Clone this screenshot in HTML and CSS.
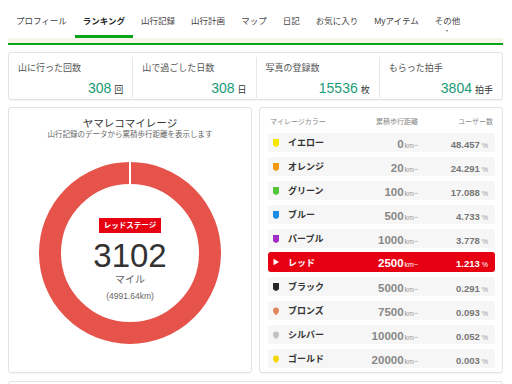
FILE: index.html
```html
<!DOCTYPE html>
<html lang="ja">
<head>
    <meta charset="UTF-8">
    <meta name="viewport" content="width=device-width, initial-scale=1.0">
    <title>ヤマレコ ランキング</title>
    <link rel="stylesheet" href="styles.css">
</head>
<body>
    <div class="page">
        <!-- タブ -->
        <nav class="tabs">
            <a class="tab">プロフィール</a>
            <a class="tab active">ランキング</a>
            <a class="tab">山行記録</a>
            <a class="tab">山行計画</a>
            <a class="tab">マップ</a>
            <a class="tab">日記</a>
            <a class="tab">お気に入り</a>
            <a class="tab">Myアイテム</a>
            <a class="tab more">その他</a>
        </nav>
        <div class="tab-band"></div>

        <!-- 集計 -->
        <section class="stats">
            <div class="stat">
                <div class="stat-label">山に行った回数</div>
                <div class="stat-value"><b>308</b><span>回</span></div>
            </div>
            <div class="stat">
                <div class="stat-label">山で過ごした日数</div>
                <div class="stat-value"><b>308</b><span>日</span></div>
            </div>
            <div class="stat">
                <div class="stat-label">写真の登録数</div>
                <div class="stat-value"><b>15536</b><span>枚</span></div>
            </div>
            <div class="stat">
                <div class="stat-label">もらった拍手</div>
                <div class="stat-value"><b>3804</b><span>拍手</span></div>
            </div>
        </section>

        <div class="panels">
            <!-- マイレージ -->
            <section class="card mileage">
                <h2 class="mileage-title">ヤマレコマイレージ</h2>
                <p class="mileage-sub">山行記録のデータから累積歩行距離を表示します</p>
                <div class="donut">
                    <svg class="donut-ring" width="182" height="182" viewBox="0 0 182 182">
                        <circle cx="91" cy="91" r="80" fill="none" stroke="#e5534b" stroke-width="22"/>
                        <line x1="91" y1="0" x2="91" y2="22" stroke="#fff" stroke-width="2"/>
                    </svg>
                    <div class="donut-center">
                        <div class="stage-badge">レッドステージ</div>
                        <div class="mile-num">3102</div>
                        <div class="mile-unit">マイル</div>
                        <div class="mile-km">(4991.64km)</div>
                    </div>
                </div>
            </section>

            <!-- マイレージカラー -->
            <section class="card colors">
                <div class="color-head">
                    <span>マイレージカラー</span>
                    <span class="right">累積歩行距離</span>
                    <span class="right">ユーザー数</span>
                </div>
                <div class="color-row">
                    <div class="color-name"><svg class="badge-icon" viewBox="0 0 6 8"><path d="M0 0H6V5.2C6 6.6 4.6 7.5 3 8C1.4 7.5 0 6.6 0 5.2Z" fill="#f7e600"/></svg>イエロー</div>
                    <div class="dist"><b>0</b><small>km~</small></div>
                    <div class="pct"><b>48.457</b><small>%</small></div>
                </div>
                <div class="color-row">
                    <div class="color-name"><svg class="badge-icon" viewBox="0 0 6 8"><path d="M0 0H6V5.2C6 6.6 4.6 7.5 3 8C1.4 7.5 0 6.6 0 5.2Z" fill="#f39a0f"/></svg>オレンジ</div>
                    <div class="dist"><b>20</b><small>km~</small></div>
                    <div class="pct"><b>24.291</b><small>%</small></div>
                </div>
                <div class="color-row">
                    <div class="color-name"><svg class="badge-icon" viewBox="0 0 6 8"><path d="M0 0H6V5.2C6 6.6 4.6 7.5 3 8C1.4 7.5 0 6.6 0 5.2Z" fill="#55c43a"/></svg>グリーン</div>
                    <div class="dist"><b>100</b><small>km~</small></div>
                    <div class="pct"><b>17.088</b><small>%</small></div>
                </div>
                <div class="color-row">
                    <div class="color-name"><svg class="badge-icon" viewBox="0 0 6 8"><path d="M0 0H6V5.2C6 6.6 4.6 7.5 3 8C1.4 7.5 0 6.6 0 5.2Z" fill="#1e8be6"/></svg>ブルー</div>
                    <div class="dist"><b>500</b><small>km~</small></div>
                    <div class="pct"><b>4.733</b><small>%</small></div>
                </div>
                <div class="color-row">
                    <div class="color-name"><svg class="badge-icon" viewBox="0 0 6 8"><path d="M0 0H6V5.2C6 6.6 4.6 7.5 3 8C1.4 7.5 0 6.6 0 5.2Z" fill="#a02fc8"/></svg>パープル</div>
                    <div class="dist"><b>1000</b><small>km~</small></div>
                    <div class="pct"><b>3.778</b><small>%</small></div>
                </div>
                <div class="color-row current">
                    <div class="color-name"><svg class="badge-icon" viewBox="0 0 6 8"><path d="M0.5 0.8L6 4L0.5 7.2Z" fill="#fff"/></svg>レッド</div>
                    <div class="dist"><b>2500</b><small>km~</small></div>
                    <div class="pct"><b>1.213</b><small>%</small></div>
                </div>
                <div class="color-row">
                    <div class="color-name"><svg class="badge-icon" viewBox="0 0 6 8"><path d="M0 0H6V5.2C6 6.6 4.6 7.5 3 8C1.4 7.5 0 6.6 0 5.2Z" fill="#262626"/></svg>ブラック</div>
                    <div class="dist"><b>5000</b><small>km~</small></div>
                    <div class="pct"><b>0.291</b><small>%</small></div>
                </div>
                <div class="color-row">
                    <div class="color-name"><svg class="badge-icon" viewBox="0 0 6 8"><path d="M3 0.4C4.8 0.4 6 1.4 6 3.3C6 5.6 4.4 7.3 3 8C1.6 7.3 0 5.6 0 3.3C0 1.4 1.2 0.4 3 0.4Z" fill="#e0875a"/></svg>ブロンズ</div>
                    <div class="dist"><b>7500</b><small>km~</small></div>
                    <div class="pct"><b>0.093</b><small>%</small></div>
                </div>
                <div class="color-row">
                    <div class="color-name"><svg class="badge-icon" viewBox="0 0 6 8"><path d="M3 0.4C4.8 0.4 6 1.4 6 3.3C6 5.6 4.4 7.3 3 8C1.6 7.3 0 5.6 0 3.3C0 1.4 1.2 0.4 3 0.4Z" fill="#c2c2c2"/></svg>シルバー</div>
                    <div class="dist"><b>10000</b><small>km~</small></div>
                    <div class="pct"><b>0.052</b><small>%</small></div>
                </div>
                <div class="color-row">
                    <div class="color-name"><svg class="badge-icon" viewBox="0 0 6 8"><path d="M3 0.4C4.8 0.4 6 1.4 6 3.3C6 5.6 4.4 7.3 3 8C1.6 7.3 0 5.6 0 3.3C0 1.4 1.2 0.4 3 0.4Z" fill="#f4d600"/></svg>ゴールド</div>
                    <div class="dist"><b>20000</b><small>km~</small></div>
                    <div class="pct"><b>0.003</b><small>%</small></div>
                </div>
            </section>
        </div>

        <section class="card next"></section>
    </div>
</body>
</html>
```

FILE: styles.css
```css
* {
    margin: 0;
    padding: 0;
    box-sizing: border-box;
}
html, body {
    overflow: hidden;
}
body {
    font-family: 'Liberation Sans', 'Noto Sans CJK JP', sans-serif;
    background-color: #fff;
    color: #333;
}
.page {
    width: 495px;
    margin-left: 8px;
}
/* タブ */
.tabs {
    display: flex;
    height: 38px;
}
.tab {
    position: relative;
    display: flex;
    align-items: center;
    padding: 4px 8px 0;
    border-bottom: 3px solid transparent;
    font-size: 8.5px;
    color: #444;
    white-space: nowrap;
    cursor: pointer;
}
.tab.active {
    border-bottom-color: #0aa51d;
    color: #222;
    font-weight: bold;
}
.tab.more::after {
    content: '';
    position: absolute;
    left: 50%;
    bottom: 3px;
    margin-left: -1.5px;
    border-left: 1.5px solid transparent;
    border-right: 1.5px solid transparent;
    border-top: 2px solid #666;
}
.tab-band {
    height: 7px;
    background: #f7f4ea;
    border-bottom: 2px solid #0aa51d;
}
/* 集計 */
.stats {
    display: grid;
    grid-template-columns: repeat(4, 1fr);
    height: 48px;
    margin-top: 7px;
    padding: 4px 0;
    border: 1px solid #e3e3e3;
    border-radius: 3px;
    box-shadow: 0 1px 1px rgba(0, 0, 0, 0.04);
}
.stat {
    padding: 5px 9px 0;
}
.stat + .stat {
    border-left: 1px solid #e6e6e6;
}
.stat-label {
    font-size: 9px;
    line-height: 13px;
    color: #555;
}
.stat-value {
    margin-top: 5px;
    text-align: right;
    line-height: 15px;
}
.stat-value b {
    font-size: 14px;
    font-weight: normal;
    color: #179b76;
}
.stat-value span {
    margin-left: 3px;
    font-size: 9px;
    color: #333;
}
/* パネル */
.panels {
    display: grid;
    grid-template-columns: 244px 1fr;
    gap: 7px;
    margin-top: 7px;
}
.card {
    height: 266px;
    border: 1px solid #e3e3e3;
    border-radius: 3px;
    box-shadow: 0 1px 1px rgba(0, 0, 0, 0.04);
}
.mileage {
    padding-top: 8px;
    text-align: center;
}
.mileage-title {
    font-size: 10.5px;
    line-height: 14px;
    font-weight: normal;
    color: #333;
}
.mileage-sub {
    font-size: 7.5px;
    line-height: 10px;
    color: #666;
}
.donut {
    display: grid;
    width: 182px;
    height: 182px;
    margin: 22px auto 0;
}
.donut-ring, .donut-center {
    grid-area: 1 / 1;
}
.donut-center {
    display: flex;
    flex-direction: column;
    align-items: center;
    padding-top: 56px;
}
.stage-badge {
    height: 15px;
    line-height: 15px;
    padding: 0 5px;
    background: #e60012;
    color: #fff;
    font-size: 7.5px;
    font-weight: bold;
}
.mile-num {
    margin-top: 6px;
    font-size: 33px;
    line-height: 34px;
    color: #333;
}
.mile-unit {
    margin-top: 1px;
    font-size: 10px;
    line-height: 12px;
    color: #666;
}
.mile-km {
    margin-top: 4px;
    font-size: 8.5px;
    line-height: 12px;
    color: #666;
}
/* マイレージカラー */
.colors {
    padding: 8px 7px 0 8px;
}
.color-head {
    display: grid;
    grid-template-columns: 88px 60px 1fr;
    height: 12px;
    margin-bottom: 5px;
    padding: 0 2px;
    font-size: 7px;
    line-height: 12px;
    color: #888;
}
.right {
    text-align: right;
}
.color-row {
    display: grid;
    grid-template-columns: 85px 60px 1fr;
    align-items: center;
    height: 19px;
    margin-bottom: 5px;
    padding: 0 7px 0 5px;
    background: #f6f6f6;
    border-radius: 2px;
}
.color-name {
    display: flex;
    align-items: center;
    gap: 9px;
    font-size: 9px;
    font-weight: bold;
    color: #333;
}
.badge-icon {
    width: 6px;
    height: 8px;
    flex: none;
}
.dist, .pct {
    text-align: right;
    color: #888;
    white-space: nowrap;
}
.dist b {
    font-size: 11.5px;
}
.dist small {
    margin-left: 1px;
    font-size: 7px;
    color: #999;
}
.pct b {
    font-size: 9.5px;
    color: #777;
}
.pct small {
    margin-left: 2px;
    font-size: 7px;
    color: #999;
}
.color-row.current {
    height: 20px;
    margin-top: -1px;
    background: #e60012;
    border-radius: 3px;
}
.color-row.current .color-name,
.color-row.current b,
.color-row.current small {
    color: #fff;
}
.next {
    height: 30px;
    margin-top: 8px;
}
```
